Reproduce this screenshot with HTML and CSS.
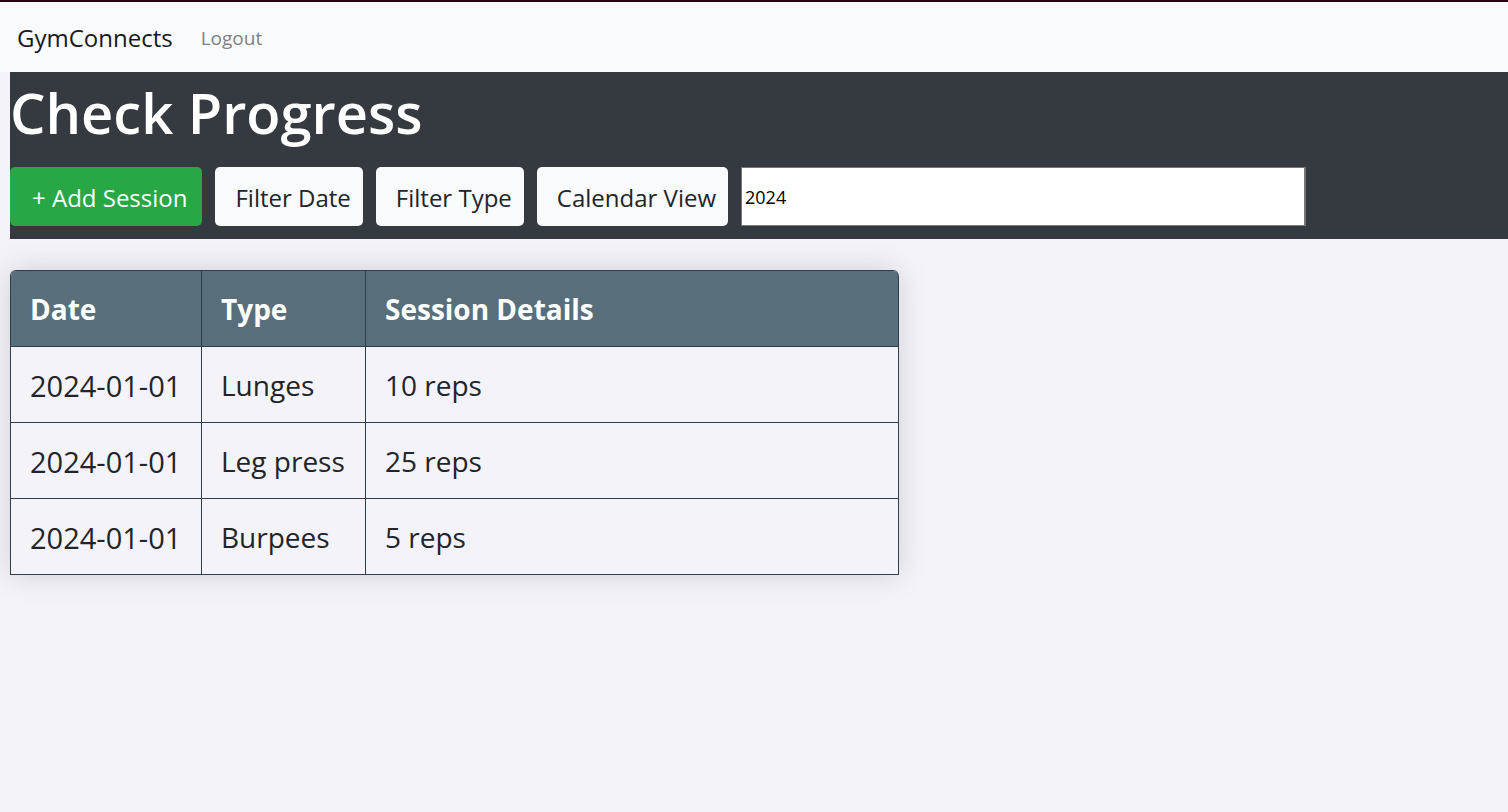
FILE: index.html
```html
<!DOCTYPE html>
<html lang="en">
<head>
<meta charset="utf-8">
<meta name="viewport" content="width=device-width, initial-scale=1">
<title>GymConnects</title>
<link rel="stylesheet" href="styles.css">
</head>
<body>
<nav class="navbar">
  <a class="navbar-brand" href="#">GymConnects</a>
  <a class="nav-link" href="#">Logout</a>
</nav>
<main class="page">
  <header class="toolbar">
    <h1 class="title">Check Progress</h1>
    <div class="controls">
      <button type="button" class="btn btn-success">+ Add Session</button>
      <button type="button" class="btn">Filter Date</button>
      <button type="button" class="btn">Filter Type</button>
      <button type="button" class="btn">Calendar View</button>
      <input class="search" type="text" value="2024" aria-label="Search sessions">
    </div>
  </header>
  <table class="sessions">
    <thead>
      <tr><th scope="col" class="date">Date</th><th scope="col" class="type">Type</th><th scope="col" class="details">Session Details</th></tr>
    </thead>
    <tbody>
      <tr><td class="day">2024-01-01</td><td>Lunges</td><td>10 reps</td></tr>
      <tr><td class="day">2024-01-01</td><td>Leg press</td><td>25 reps</td></tr>
      <tr><td class="day">2024-01-01</td><td>Burpees</td><td>5 reps</td></tr>
    </tbody>
  </table>
</main>
</body>
</html>
```
FILE: styles.css
```css
* { box-sizing: border-box; }

body {
  margin: 0;
  min-height: 100vh;
  background: #f4f3fa;
  color: #212529;
  font-family: "Segoe UI", "Open Sans", "Noto Sans", sans-serif;
}

.navbar {
  display: flex;
  align-items: center;
  gap: 28px;
  min-height: 72px;
  padding: 2px 17px 0;
  border-top: 2px solid #210610;
  background: #f8fafc;
}

.navbar-brand,
.nav-link { text-decoration: none; line-height: 36px; }
.navbar-brand { color: #17191c; font-size: 24px; }
.nav-link { color: #808184; font-size: 19px; }

.page { padding: 0 0 40px 10px; }

.toolbar {
  padding: 2px 0 13px;
  background: #353a40;
}

.title {
  margin: 0 0 17px;
  color: #fff;
  font-size: 56px;
  font-weight: 600;
  line-height: 76px;
}

.controls { display: flex; gap: 13px; }

.btn {
  height: 59px;
  padding: 2px 12px 0 20px;
  border: 0;
  border-radius: 5px;
  background: #f8fafc;
  color: #212529;
  font: inherit;
  font-size: 24px;
  white-space: nowrap;
}
.btn-success {
  padding: 2px 15px 0 22px;
  background: #28a745;
  color: #fff;
}

.search {
  flex: 0 1 565px;
  min-width: 0;
  padding: 0 3px;
  border: 1px solid #767676;
  border-right-width: 2px;
  border-radius: 0;
  background: #fff;
  color: #000;
  font: inherit;
  font-size: 18px;
}

.sessions {
  margin-top: 31px;
  border-collapse: separate;
  border-spacing: 0;
  border: solid #2c3e50;
  border-width: 1px 0 0 1px;
  border-radius: 6px 6px 0 0;
  box-shadow: 0 0 30px rgba(0, 0, 0, 0.15);
  font-size: 28px;
  line-height: 37px;
}

.sessions th,
.sessions td {
  padding: 20px 19px 18px;
  border: solid #2c3e50;
  border-width: 0 1px 1px 0;
  text-align: left;
  white-space: nowrap;
}
.sessions th { background: #586f7b; color: #fff; font-weight: 700; }
.sessions th:first-child { border-top-left-radius: 5px; }
.sessions th:last-child { border-top-right-radius: 6px; }
.sessions .date { width: 191px; }
.sessions .type { width: 164px; }
.sessions .details { width: 533px; }
.sessions .day { font-size: 29px; }
```
